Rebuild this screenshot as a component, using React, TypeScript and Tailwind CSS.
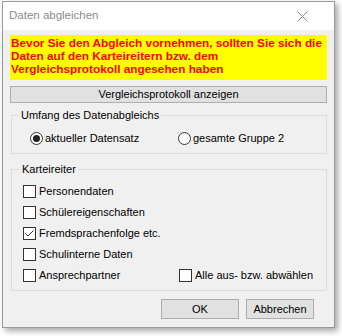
import React from 'react';

const font = { fontFamily: '"Liberation Sans", Arial, sans-serif' };

function Checkbox({ label, checked = false }: { label: string; checked?: boolean }) {
  return (
    <div className="flex items-center h-[13px]">
      <div className="w-[13px] h-[13px] border border-[#333] bg-white flex items-center justify-center">
        {checked && (
          <svg width="11" height="11" viewBox="0 0 11 11">
            <path d="M1.5 5.5 L4 8 L9.5 2.5" fill="none" stroke="#333" strokeWidth="1" />
          </svg>
        )}
      </div>
      <span className="ml-[3px] text-[11px] leading-none text-black whitespace-nowrap">{label}</span>
    </div>
  );
}

function Radio({ label, checked = false }: { label: string; checked?: boolean }) {
  return (
    <div className="flex items-center h-[13px]">
      <div className="w-[13px] h-[13px] rounded-full border border-[#333] bg-white flex items-center justify-center">
        {checked && <div className="w-[7px] h-[7px] rounded-full bg-[#222]" />}
      </div>
      <span className="ml-[2px] text-[11px] leading-none text-black whitespace-nowrap">{label}</span>
    </div>
  );
}

export default function App() {
  return (
    <div className="w-[342px] h-[336px] bg-white overflow-hidden" style={font}>
      <div className="ml-[2px] mt-[1px] w-[333px] h-[327px] border border-[#9a9a9a] bg-[#f0f0f0] shadow-[3px_3px_6px_rgba(0,0,0,0.35)] flex flex-col">
        {/* Title bar */}
        <div className="h-[28px] bg-white flex items-center justify-between pl-[6px] pr-[26px]">
          <span className="text-[11.5px] text-[#8c8c8c]">Daten abgleichen</span>
          <svg width="11" height="11" viewBox="0 0 11 11">
            <path d="M0.5 0.5 L10.5 10.5 M10.5 0.5 L0.5 10.5" stroke="#8c8c8c" strokeWidth="1" />
          </svg>
        </div>

        <div className="px-[7px] pt-[5px] flex flex-col">
          {/* Warning */}
          <div className="h-[45px] bg-[#ffff00] px-[1px] pt-[2px] text-[#ff0000] font-bold text-[11.8px] leading-[13px] whitespace-nowrap overflow-hidden">
            Bevor Sie den Abgleich vornehmen, sollten Sie sich die<br />
            Daten auf den Karteireitern bzw. dem<br />
            Vergleichsprotokoll angesehen haben
          </div>

          <button className="mt-[6px] h-[17px] border border-[#adadad] bg-[#e1e1e1] text-[11px] leading-none text-black">
            Vergleichsprotokoll anzeigen
          </button>

          {/* Umfang */}
          <fieldset className="mt-[5px] ml-[1px] h-[46px] border border-[#dcdcdc] px-[8px]">
            <legend className="px-[2px] ml-[-1px] text-[11px] leading-[14px] text-black">Umfang des Datenabgleichs</legend>
            <div className="flex mt-[10px] pl-[10px]">
              <div className="w-[148px]">
                <Radio label="aktueller Datensatz" checked />
              </div>
              <Radio label="gesamte Gruppe 2" />
            </div>
          </fieldset>

          {/* Karteireiter */}
          <fieldset className="mt-[8px] ml-[1px] h-[129px] border border-[#dcdcdc] pl-[11px]">
            <legend className="px-[2px] ml-[-3px] text-[11px] leading-[14px] text-black">Karteireiter</legend>
            <div className="flex flex-col gap-[8px] mt-[9px]">
              <Checkbox label="Personendaten" />
              <Checkbox label="Schülereigenschaften" />
              <Checkbox label="Fremdsprachenfolge etc." checked />
              <Checkbox label="Schulinterne Daten" />
              <div className="flex">
                <div className="w-[156px]">
                  <Checkbox label="Ansprechpartner" />
                </div>
                <Checkbox label="Alle aus- bzw. abwählen" />
              </div>
            </div>
          </fieldset>

          <div className="flex justify-end gap-[7px] mt-[8px] pr-[13px]">
            <button className="w-[78px] h-[20px] border border-[#adadad] bg-[#e1e1e1] text-[11px] leading-none text-black">OK</button>
            <button className="w-[68px] h-[20px] border border-[#adadad] bg-[#e1e1e1] text-[11px] leading-none text-black">Abbrechen</button>
          </div>
        </div>
      </div>
    </div>
  );
}
